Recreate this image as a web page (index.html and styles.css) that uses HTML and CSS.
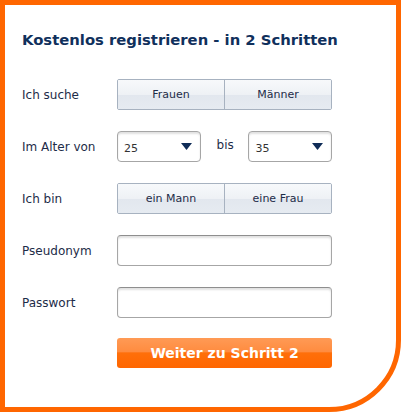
FILE: index.html
```html
<!DOCTYPE html>
<html lang="de">
<head>
<meta charset="utf-8">
<title>Kostenlos registrieren</title>
<link rel="stylesheet" href="styles.css">
</head>
<body>
<div class="box">
  <h1 class="title">Kostenlos registrieren - in 2 Schritten</h1>
  <form class="form">
    <div class="row">
      <label class="label">Ich suche</label>
      <div class="seg">
        <button type="button" class="seg-btn">Frauen</button>
        <button type="button" class="seg-btn">Männer</button>
      </div>
    </div>
    <div class="row">
      <label class="label">Im Alter von</label>
      <div class="ages">
        <div class="sel">
          <select class="sel-input"><option>25</option></select>
          <svg class="sel-arrow" width="11" height="7" viewBox="0 0 11 7"><path d="M0 0H11L5.5 7Z" fill="#0f2c57"/></svg>
        </div>
        <span class="bis">bis</span>
        <div class="sel">
          <select class="sel-input"><option>35</option></select>
          <svg class="sel-arrow" width="11" height="7" viewBox="0 0 11 7"><path d="M0 0H11L5.5 7Z" fill="#0f2c57"/></svg>
        </div>
      </div>
    </div>
    <div class="row">
      <label class="label">Ich bin</label>
      <div class="seg">
        <button type="button" class="seg-btn">ein Mann</button>
        <button type="button" class="seg-btn">eine Frau</button>
      </div>
    </div>
    <div class="row">
      <label class="label">Pseudonym</label>
      <input class="field" type="text">
    </div>
    <div class="row">
      <label class="label">Passwort</label>
      <input class="field" type="password">
    </div>
    <div class="row">
      <span></span>
      <button type="button" class="submit">Weiter zu Schritt 2</button>
    </div>
  </form>
</div>
</body>
</html>
```
FILE: styles.css
```css
html, body {
  margin: 0;
  padding: 0;
  background: #fff;
}
.box {
  box-sizing: border-box;
  width: 401px;
  height: 412px;
  border: 5px solid #ff6600;
  border-bottom-right-radius: 72px;
  background: #fff;
  padding: 26px 0 0 17px;
  font-family: "DejaVu Sans", Verdana, sans-serif;
}
.title {
  margin: 0;
  font-size: 14.8px;
  font-weight: bold;
  color: #10305c;
  line-height: 18px;
}
.form {
  margin-top: 30px;
  display: flex;
  flex-direction: column;
  gap: 21px;
}
.row {
  display: grid;
  grid-template-columns: 95px 215px;
  align-items: center;
  height: 31px;
}
.label {
  font-size: 12px;
  color: #1d2c48;
}
.seg {
  display: flex;
  height: 31px;
  box-sizing: border-box;
  border: 1px solid #a7b2c0;
  border-radius: 2px;
  overflow: hidden;
}
.seg-btn {
  flex: 1;
  margin: 0;
  border: 0;
  padding: 0;
  font-family: inherit;
  font-size: 11px;
  color: #1d2c48;
  background: linear-gradient(#f7f9fb 0%, #eef1f5 50%, #e2e7ee 52%, #e6ebf1 100%);
}
.seg-btn + .seg-btn {
  border-left: 1px solid #a7b2c0;
}
.ages {
  display: flex;
  align-items: center;
}
.sel {
  position: relative;
  width: 84px;
  height: 31px;
}
.sel-input {
  appearance: none;
  -webkit-appearance: none;
  width: 100%;
  height: 100%;
  box-sizing: border-box;
  margin: 0;
  border: 1px solid #a6a6a6;
  border-radius: 4px;
  background: #fff;
  box-shadow: inset 0 2px 2px rgba(0,0,0,0.12);
  padding: 3px 0 0 6px;
  font-family: inherit;
  font-size: 11px;
  color: #333;
}
.sel-arrow {
  position: absolute;
  right: 9px;
  top: 12px;
  pointer-events: none;
}
.bis {
  width: 48px;
  padding-left: 16px;
  box-sizing: border-box;
  font-size: 12px;
  color: #1d2c48;
  margin-top: -4px;
}
.field {
  box-sizing: border-box;
  width: 215px;
  height: 31px;
  margin: 0;
  border: 1px solid #a6a6a6;
  border-top-color: #8e8e8e;
  border-radius: 4px;
  background: #fff;
  box-shadow: inset 0 2px 2px rgba(0,0,0,0.12);
}
.submit {
  box-sizing: border-box;
  width: 215px;
  height: 30px;
  margin: 0;
  margin-top: -3px;
  border: 0;
  border-radius: 3px;
  background: linear-gradient(#ff9a55 0%, #ff8c40 45%, #ff6f0a 50%, #ff6600 100%);
  color: #fff;
  font-family: inherit;
  font-size: 14px;
  font-weight: bold;
}
```
